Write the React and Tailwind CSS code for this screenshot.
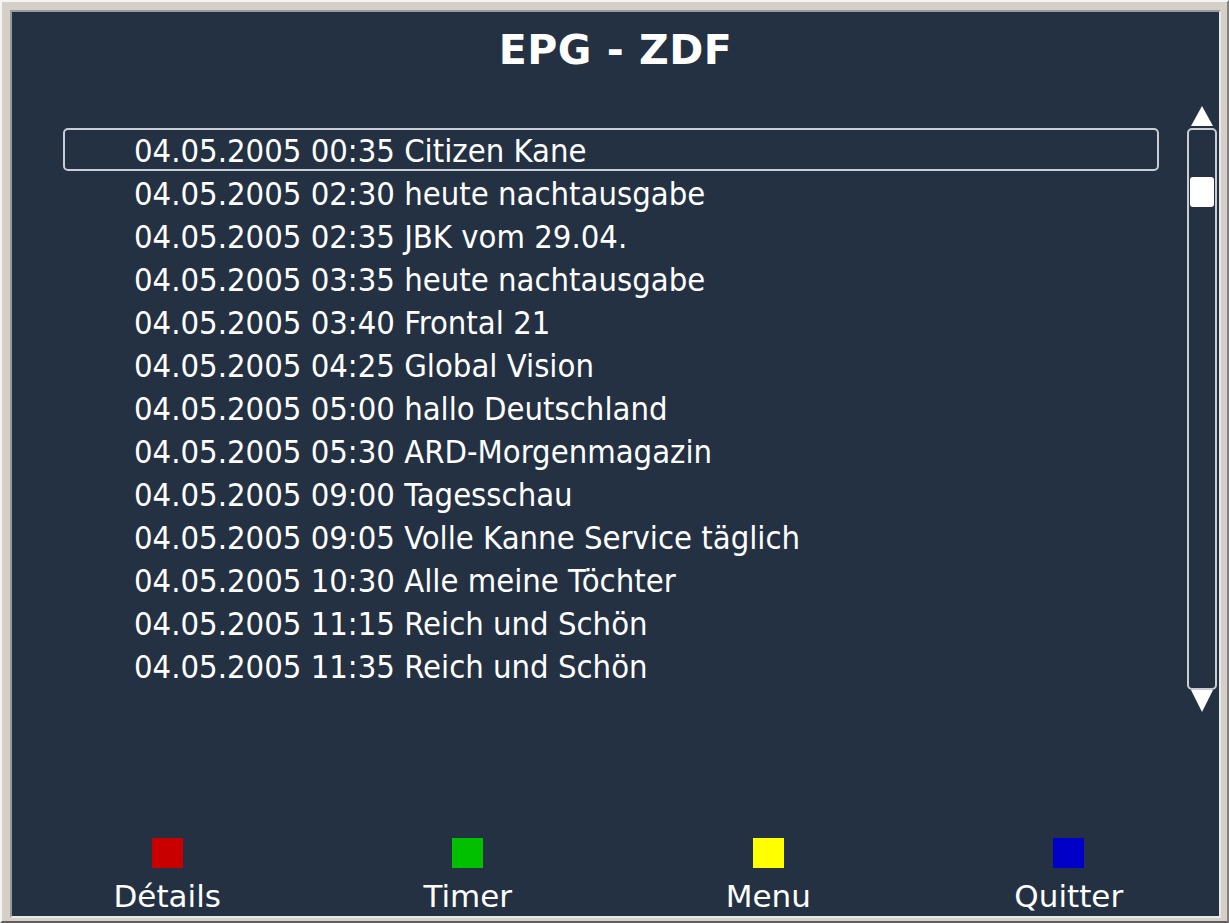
import React from "react";

const rows = [
  "04.05.2005 00:35 Citizen Kane",
  "04.05.2005 02:30 heute nachtausgabe",
  "04.05.2005 02:35 JBK vom 29.04.",
  "04.05.2005 03:35 heute nachtausgabe",
  "04.05.2005 03:40 Frontal 21",
  "04.05.2005 04:25 Global Vision",
  "04.05.2005 05:00 hallo Deutschland",
  "04.05.2005 05:30 ARD-Morgenmagazin",
  "04.05.2005 09:00 Tagesschau",
  "04.05.2005 09:05 Volle Kanne Service täglich",
  "04.05.2005 10:30 Alle meine Töchter",
  "04.05.2005 11:15 Reich und Schön",
  "04.05.2005 11:35 Reich und Schön",
];

const buttons = [
  { label: "Détails", color: "bg-[#c80000]" },
  { label: "Timer", color: "bg-[#00c000]" },
  { label: "Menu", color: "bg-[#ffff00]" },
  { label: "Quitter", color: "bg-[#0000c8]" },
];

export default function App() {
  return (
    <div className="w-[1229px] h-[923px] bg-[#d4d0c8] border-2 border-t-[#f4f4f4] border-l-[#f4f4f4] border-r-[#808080] border-b-[#606060] pt-[8px] pl-[8px] pr-[6px] pb-[3px] overflow-hidden">
      <div
        className="h-full flex flex-col bg-[#233143] border-2 border-t-[#9a9a9a] border-l-[#9a9a9a] border-r-[#e8e8e8] border-b-[#e8e8e8] text-white"
        style={{ fontFamily: '"DejaVu Sans", Verdana, sans-serif' }}
      >
        <div className="h-[76px] flex items-center justify-center">
          <h1 className="text-[41px] leading-none font-bold tracking-[0.5px]">EPG - ZDF</h1>
        </div>

        <div className="mt-[18px] flex">
          <div
            className="ml-[51px] w-[1096px] mt-[22px] flex flex-col"
            style={{ fontFamily: '"DejaVu Sans Condensed", "DejaVu Sans", sans-serif' }}
          >
            {rows.map((r, i) => (
              <div
                key={i}
                className={
                  "h-[43px] pl-[69px] pt-[4px] border-2 rounded-[5px] flex items-center text-[32.5px] leading-none whitespace-nowrap " +
                  (i === 0 ? "border-[#c8cdd6]" : "border-transparent")
                }
              >
                {r}
              </div>
            ))}
          </div>

          <div className="ml-[28px] w-[30px] flex flex-col items-center">
            <svg width="22" height="20" viewBox="0 0 22 20" className="block">
              <polygon points="11,0 22,20 0,20" fill="#ffffff" />
            </svg>
            <div className="mt-[2px] w-[30px] h-[562px] border-2 border-[#c8cdd6] rounded-[5px] px-[1px]">
              <div className="mt-[47px] h-[30px] rounded-[3px] bg-white" />
            </div>
            <svg width="22" height="22" viewBox="0 0 22 22" className="block">
              <polygon points="0,0 22,0 11,22" fill="#ffffff" />
            </svg>
          </div>
        </div>

        <div className="mt-auto pl-[5px] pb-[4px] grid grid-cols-4">
          {buttons.map((b) => (
            <div key={b.label} className="flex flex-col items-center">
              <div className={"w-[31px] h-[30px] " + b.color} />
              <div className="mt-[13px] text-[31px] leading-none">{b.label}</div>
            </div>
          ))}
        </div>
      </div>
    </div>
  );
}
